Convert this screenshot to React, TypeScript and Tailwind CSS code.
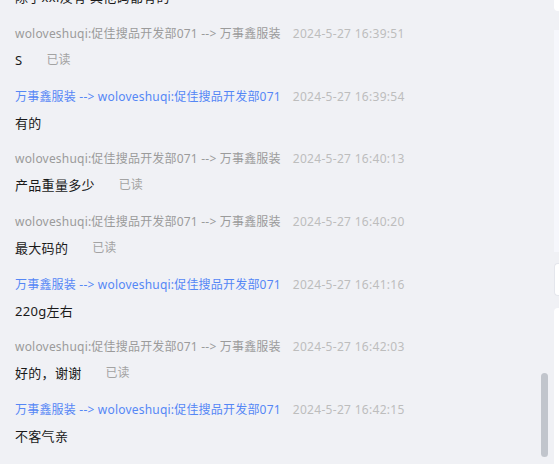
import React from 'react';

interface Msg {
  id: number;
  fromShop: boolean;
  time: string;
  text: string;
  read?: boolean;
}

const CUSTOMER = 'woloveshuqi:促佳搜品开发部071';
const SHOP = '万事鑫服装';

const messages: Msg[] = [
  { id: 0, fromShop: false, time: '2024-5-27 16:39:40', text: '除了xxl没有 其他码都有的' },
  { id: 1, fromShop: false, time: '2024-5-27 16:39:51', text: 'S', read: true },
  { id: 2, fromShop: true, time: '2024-5-27 16:39:54', text: '有的' },
  { id: 3, fromShop: false, time: '2024-5-27 16:40:13', text: '产品重量多少', read: true },
  { id: 4, fromShop: false, time: '2024-5-27 16:40:20', text: '最大码的', read: true },
  { id: 5, fromShop: true, time: '2024-5-27 16:41:16', text: '220g左右' },
  { id: 6, fromShop: false, time: '2024-5-27 16:42:03', text: '好的，谢谢', read: true },
  { id: 7, fromShop: true, time: '2024-5-27 16:42:15', text: '不客气亲' },
];

const FONT = "font-['Microsoft_YaHei','Noto_Sans','Noto_Sans_CJK_SC',sans-serif]";

export default function App() {
  return (
    <div className={`flex h-[464px] w-[559px] overflow-hidden bg-[#f0f1f5] ${FONT}`}>
      {/* Message history */}
      <div className="relative flex-1 overflow-hidden">
        <div className="mt-[-50.67px] pl-[15px]">
          {messages.map((m) => (
            <div key={m.id} className="h-[62.67px] pt-[12px]">
              <div className="flex items-center text-[12px] leading-[20px] whitespace-nowrap">
                <span className={`tracking-[0.2px] ${m.fromShop ? 'text-[#5587f5]' : 'text-[#9b9b9b]'}`}>
                  {m.fromShop ? `${SHOP} --> ${CUSTOMER}` : `${CUSTOMER} --> ${SHOP}`}
                </span>
                <span className="ml-[12px] tracking-[0.3px] text-[#bdbdbd]">{m.time}</span>
              </div>
              <div className="mt-[6px] flex items-center text-[13px] leading-[20px] whitespace-nowrap">
                <span className="tracking-[0.3px] text-[#1a1a1a]">{m.text}</span>
                {m.read && <span className="ml-[24px] text-[12px] text-[#a3a3a3]">已读</span>}
              </div>
            </div>
          ))}
        </div>

        {/* Scrollbar */}
        <div className="absolute left-[541px] top-[373px] h-[84px] w-[7px] rounded-full bg-[#c1c5cc]" />
      </div>

      {/* Edge of the neighbouring panel */}
      <div className="flex w-[5px] flex-col">
        <div className="h-[11px] rounded-bl-[4px] bg-white" />
        <div className="mt-[19px] h-[222px] bg-[#f6f7fc]" />
        <div className="mt-[11px] h-[33px] rounded-l-[4px] border border-r-0 border-[#e4e6ec] bg-white" />
        <div className="mt-[12px] flex-1 rounded-tl-[4px] bg-white" />
      </div>
    </div>
  );
}
